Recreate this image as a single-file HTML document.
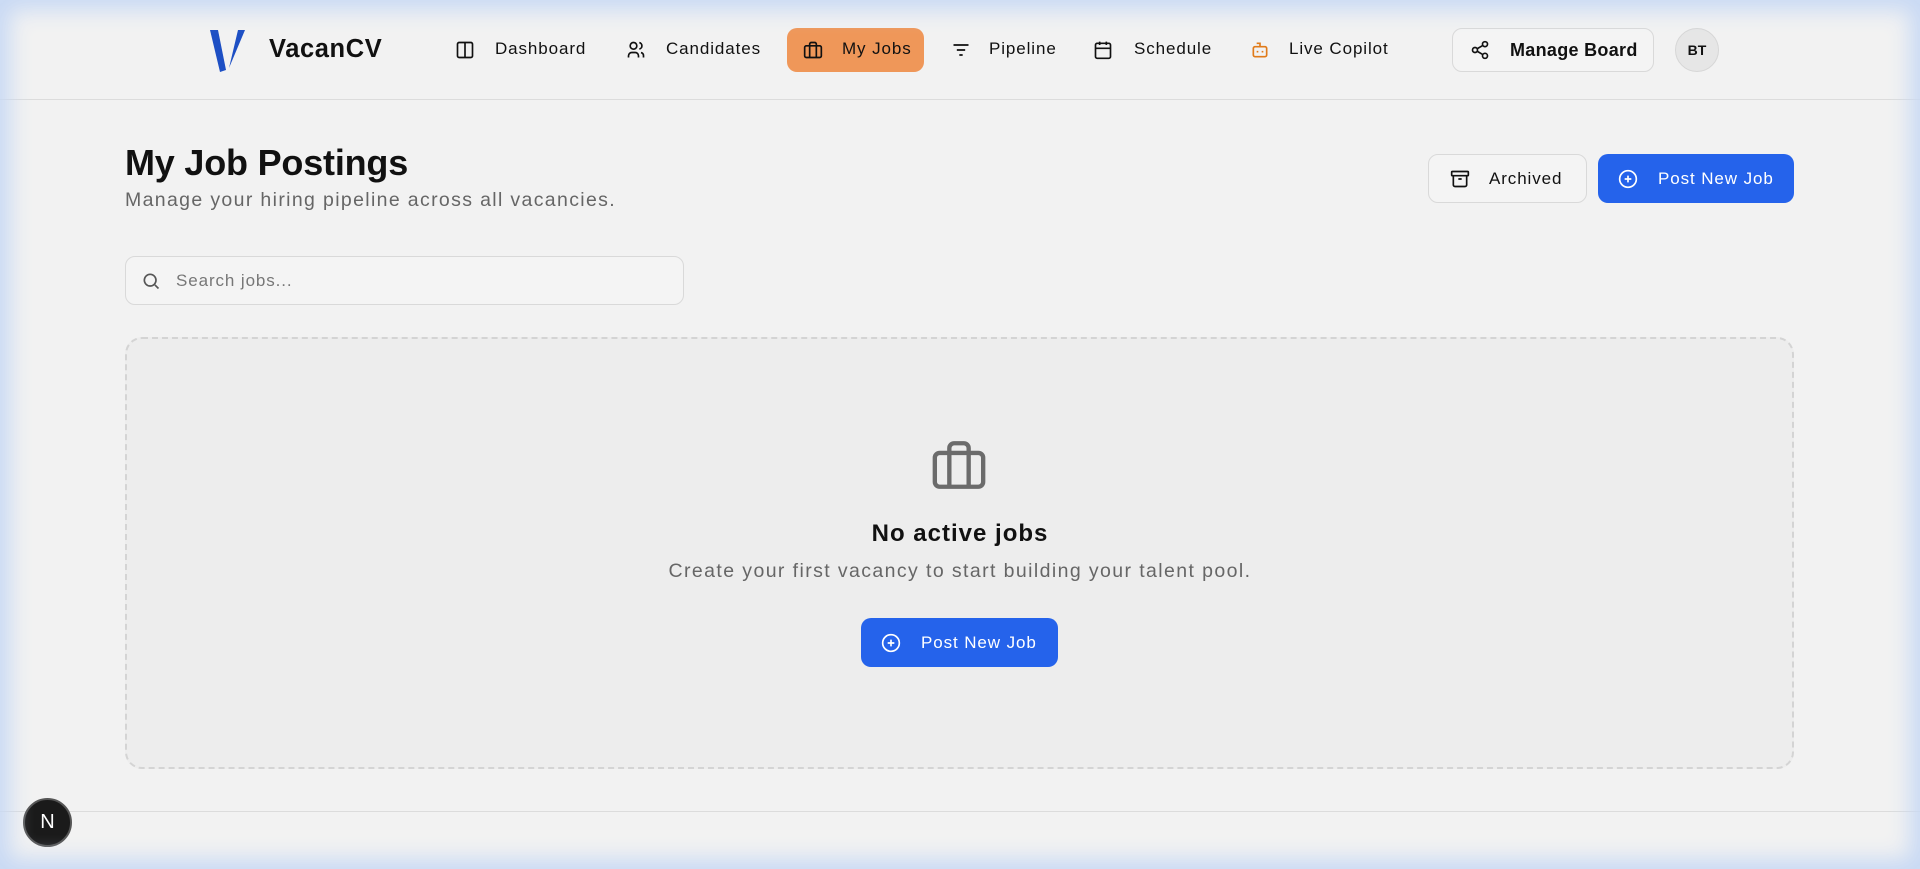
<!DOCTYPE html>
<html><head><meta charset="utf-8"><style>
*{box-sizing:border-box;margin:0;padding:0}
body{width:1920px;height:869px;overflow:hidden;background:#f2f2f2;font-family:"Liberation Sans",sans-serif;color:#111;position:relative}
.glow{position:absolute;inset:0;pointer-events:none;box-shadow:inset 0 0 22px 10px #c8d9f4;z-index:10}
.hdr{position:absolute;left:0;top:0;width:1920px;height:100px;border-bottom:1px solid #dcdcdc}
.a{position:absolute;display:flex;align-items:center}
.nav{font-size:17px;font-weight:500;color:#111;letter-spacing:0.9px}
svg{display:block}
.btn{position:absolute;display:flex;align-items:center;border-radius:10px;font-size:17px;letter-spacing:0.9px}
</style></head><body>
<div class="hdr">
  <svg class="a" style="left:207px;top:30px" width="40" height="42" viewBox="0 0 40 42"><path d="M3 0 L11 0 L19 40 L13 42 Z" fill="#1d4fc4"/><path d="M31 0 L38 0 L22 38 Z" fill="#1d4fc4"/></svg>
  <div class="a" style="left:269px;top:35px;font-size:25.5px;font-weight:800;letter-spacing:0.6px">VacanCV</div>

  <svg class="a" style="left:455px;top:40px" width="20" height="20" viewBox="0 0 24 24" fill="none" stroke="#111" stroke-width="2"><rect x="3" y="3" width="18" height="18" rx="2"/><path d="M12 3v18"/></svg>
  <div class="a nav" style="left:495px;top:39px">Dashboard</div>
  <svg class="a" style="left:626px;top:40px" width="20" height="20" viewBox="0 0 24 24" fill="none" stroke="#111" stroke-width="2"><circle cx="9" cy="7" r="4"/><path d="M3 21v-2a4 4 0 0 1 4-4h4a4 4 0 0 1 4 4v2M16 3.1a4 4 0 0 1 0 7.8M21 21v-2a4 4 0 0 0-3-3.9"/></svg>
  <div class="a nav" style="left:666px;top:39px">Candidates</div>
  <div class="a" style="left:787px;top:28px;width:137px;height:44px;background:#ef9759;border-radius:10px"></div>
  <svg class="a" style="left:803px;top:40px" width="20" height="20" viewBox="0 0 24 24" fill="none" stroke="#111" stroke-width="2"><rect x="2" y="7" width="20" height="14" rx="2"/><path d="M16 21V5a2 2 0 0 0-2-2h-4a2 2 0 0 0-2 2v16"/></svg>
  <div class="a nav" style="left:842px;top:39px">My Jobs</div>
  <svg class="a" style="left:951px;top:40px" width="20" height="20" viewBox="0 0 24 24" fill="none" stroke="#111" stroke-width="2"><path d="M3 6h18M7 12h10M10 18h4"/></svg>
  <div class="a nav" style="left:989px;top:39px">Pipeline</div>
  <svg class="a" style="left:1093px;top:40px" width="20" height="20" viewBox="0 0 24 24" fill="none" stroke="#111" stroke-width="2"><rect x="3" y="4" width="18" height="18" rx="2"/><path d="M16 2v4M8 2v4M3 10h18"/></svg>
  <div class="a nav" style="left:1134px;top:39px">Schedule</div>
  <svg class="a" style="left:1250px;top:40px" width="20" height="20" viewBox="0 0 24 24" fill="none" stroke="#e07b1a" stroke-width="2"><path d="M12 8V4H8"/><rect x="4" y="8" width="16" height="12" rx="2"/><path d="M9 13v2M15 13v2"/></svg>
  <div class="a nav" style="left:1289px;top:39px">Live Copilot</div>

  <div class="btn" style="left:1452px;top:28px;width:202px;height:44px;border:1px solid #d9d9d9;background:#f4f4f4;letter-spacing:0.3px">
    <svg style="margin-left:17px" width="20" height="20" viewBox="0 0 24 24" fill="none" stroke="#111" stroke-width="2"><circle cx="18" cy="5" r="3"/><circle cx="6" cy="12" r="3"/><circle cx="18" cy="19" r="3"/><path d="M8.6 13.5l6.8 4M15.4 6.5l-6.8 4"/></svg>
    <span style="margin-left:20px;font-weight:700;font-size:18px">Manage Board</span>
  </div>
  <div class="a" style="left:1675px;top:28px;width:44px;height:44px;border-radius:50%;background:#e6e6e6;border:1px solid #d6d6d6;justify-content:center;font-size:14px;font-weight:600">BT</div>
</div>

<div class="a" style="left:125px;top:142px;font-size:36px;font-weight:800;letter-spacing:-0.2px">My Job Postings</div>
<div class="a" style="left:125px;top:189px;font-size:19.5px;color:#666;letter-spacing:1.35px">Manage your hiring pipeline across all vacancies.</div>

<div class="btn" style="left:1428px;top:154px;width:159px;height:49px;border:1px solid #d9d9d9;background:#f4f4f4">
  <svg style="margin-left:21px" width="20" height="20" viewBox="0 0 24 24" fill="none" stroke="#111" stroke-width="2"><rect x="2" y="3" width="20" height="5" rx="1"/><path d="M4 8v11a2 2 0 0 0 2 2h12a2 2 0 0 0 2-2V8M10 12h4"/></svg>
  <span style="margin-left:19px">Archived</span>
</div>
<div class="btn" style="left:1598px;top:154px;width:196px;height:49px;background:#2563eb;color:#fff">
  <svg style="margin-left:20px" width="20" height="20" viewBox="0 0 24 24" fill="none" stroke="#fff" stroke-width="2"><circle cx="12" cy="12" r="10"/><path d="M12 8v8M8 12h8"/></svg>
  <span style="margin-left:20px">Post New Job</span>
</div>

<div class="btn" style="left:125px;top:256px;width:559px;height:49px;border:1px solid #d9d9d9;background:#f4f4f4;color:#777">
  <svg style="margin-left:15px" width="20" height="20" viewBox="0 0 24 24" fill="none" stroke="#555" stroke-width="2"><circle cx="11" cy="11" r="7"/><path d="M21 21l-4.3-4.3"/></svg>
  <span style="margin-left:15px">Search jobs...</span>
</div>

<div class="a" style="left:125px;top:337px;width:1669px;height:432px;border:2px dashed #d4d4d4;border-radius:17px;background:#ededed"></div>
<svg class="a" style="left:930px;top:436px" width="58" height="58" viewBox="0 0 24 24" fill="none" stroke="#6b6b6b" stroke-width="1.8"><rect x="2" y="7" width="20" height="14" rx="2"/><path d="M16 21V5a2 2 0 0 0-2-2h-4a2 2 0 0 0-2 2v16"/></svg>
<div class="a" style="left:0;width:1920px;justify-content:center;top:520px;font-size:24px;font-weight:800;letter-spacing:1px">No active jobs</div>
<div class="a" style="left:0;width:1920px;justify-content:center;top:560px;font-size:19.5px;color:#666;letter-spacing:1.4px">Create your first vacancy to start building your talent pool.</div>
<div class="btn" style="left:861px;top:618px;width:197px;height:49px;background:#2563eb;color:#fff">
  <svg style="margin-left:20px" width="20" height="20" viewBox="0 0 24 24" fill="none" stroke="#fff" stroke-width="2"><circle cx="12" cy="12" r="10"/><path d="M12 8v8M8 12h8"/></svg>
  <span style="margin-left:20px">Post New Job</span>
</div>

<div class="a" style="left:0;top:811px;width:1920px;height:1px;background:#dcdcdc"></div>
<div class="a" style="left:23px;top:798px;width:49px;height:49px;border-radius:50%;background:#1a1a1a;border:2px solid #555;justify-content:center;color:#fff;font-size:20px">N</div>
<div class="glow"></div>
</body></html>
